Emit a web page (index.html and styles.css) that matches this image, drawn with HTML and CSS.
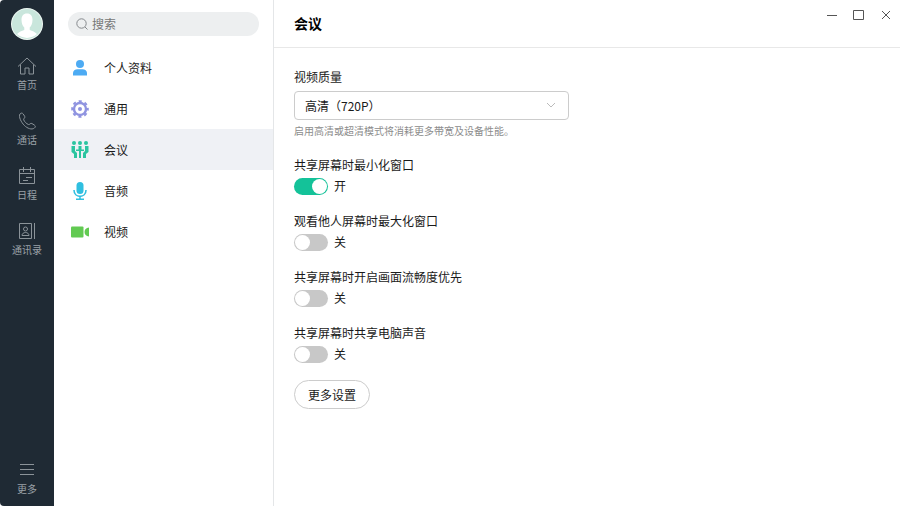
FILE: index.html
```html
<!DOCTYPE html>
<html lang="zh-CN">
<head>
    <meta charset="UTF-8">
    <meta name="viewport" content="width=device-width, initial-scale=1.0">
    <title>会议</title>
    <link rel="stylesheet" href="styles.css">
</head>
<body>

    <div class="app">
        <!-- Main navigation -->
        <nav class="rail">
            <svg class="avatar" viewBox="0 0 32 32">
                <circle cx="16" cy="16" r="16" fill="#eef7f3"/>
                <circle cx="16" cy="16" r="15" fill="#c9e6dc"/>
                <path d="M16 5.500c3.800 0 5.500 2.600 5.500 6.200 0 3.500-1.200 6.300-2.800 7.800v2.500c2.500.9 5.500 2 7.300 4.100A15 15 0 0 1 6 26.100c1.800-2.100 4.800-3.200 7.300-4.100v-2.500c-1.600-1.500-2.800-4.300-2.800-7.800 0-3.600 1.700-6.200 5.500-6.200z" fill="#fff"/>
            </svg>

            <a href="#" class="rail-link">
                <svg viewBox="0 0 20 20"><path d="M1 10.500 10 2l9 8.500M3.500 8.500v9.500H8v-6h4v6h4.500V8.500"/></svg>
                <span>首页</span>
            </a>
            <a href="#" class="rail-link">
                <svg viewBox="0 0 20 20"><path d="M3 3C4 1.800 5.300 1.800 6.200 3l1.500 2.300c.9 1.500-1.500 2.200-1 3.500.8 2 2.700 3.900 4.700 4.700 1.300.5 2-1.900 3.500-1l2.500 1.600c1.300.9 1.200 2-.1 3-2.500 2-7 .3-10-2.700S1.200 5.500 3 3z"/></svg>
                <span>通话</span>
            </a>
            <a href="#" class="rail-link">
                <svg viewBox="0 0 20 20"><path d="M2.500 3.500h15v14h-15zM2.500 7.500h15M6.500 1v5M13.500 1v5M9 11.500h6M6 14.500h5"/></svg>
                <span>日程</span>
            </a>
            <a href="#" class="rail-link">
                <svg viewBox="0 0 20 20"><path d="M2.500 2.500h12v15h-12zM17.500 2v16M5 14.500c0-4 7-4 7 0z"/><circle cx="8.500" cy="8" r="2"/></svg>
                <span>通讯录</span>
            </a>
            <a href="#" class="rail-link rail-more">
                <svg viewBox="0 0 20 20"><path d="M3 4.500h14M3 9.500h14M3 14.500h14"/></svg>
                <span>更多</span>
            </a>
        </nav>

        <!-- Settings categories -->
        <aside class="menu">
            <label class="search">
                <svg viewBox="0 0 12 12"><circle cx="5.500" cy="5.500" r="4.700"/><path d="M9 9l2.500 2.500"/></svg>
                <input type="text" placeholder="搜索" aria-label="搜索">
            </label>

            <a href="#" class="menu-item">
                <svg viewBox="0 0 18 18" fill="#4dabf3">
                    <circle cx="9" cy="5" r="4"/>
                    <path d="M2 16.500V14c0-2.500 2-3.800 4.500-3.800h5c2.500 0 4.500 1.300 4.500 3.800v2.500z"/>
                </svg>
                <span>个人资料</span>
            </a>
            <a href="#" class="menu-item">
                <svg viewBox="0 0 18 18" fill="none" stroke="#8f93e0">
                    <circle cx="9" cy="9" r="6" stroke-width="2.400"/>
                    <circle cx="9" cy="9" r="7.800" stroke-width="2" stroke-dasharray="3.126 3" stroke-dashoffset="1.563"/>
                    <circle cx="9" cy="9" r="2" fill="#8f93e0" stroke="none"/>
                </svg>
                <span>通用</span>
            </a>
            <a href="#" class="menu-item active">
                <svg viewBox="0 0 18 18" fill="#2bc5a0">
                    <circle cx="3" cy="2" r="2"/>
                    <circle cx="9" cy="2" r="2"/>
                    <circle cx="15" cy="2" r="2"/>
                    <path d="M.5 5H4v5l2 2v5H3v-4L.5 11zM17.500 5H14v5l-2 2v5h3v-4l2.500-2zM7.500 5h3v3.500H13V10h-3v7H8v-7H5V8.500h2.500z"/>
                </svg>
                <span>会议</span>
            </a>
            <a href="#" class="menu-item">
                <svg viewBox="0 0 18 18" fill="#2fbfe0">
                    <rect x="5.500" y="0" width="7" height="12" rx="3.500"/>
                    <path d="M3 8c0 8.500 12 8.500 12 0M9 14.500V17M5 17.200h8" fill="none" stroke="#2fbfe0" stroke-width="1.600"/>
                </svg>
                <span>音频</span>
            </a>
            <a href="#" class="menu-item">
                <svg viewBox="0 0 18 18" fill="#62ca52">
                    <rect x="0" y="3.500" width="12.500" height="11" rx="1"/>
                    <path d="M18 4.500v9c-3-.5-4.500-2-4.500-4.500s1.500-4 4.500-4.500z"/>
                </svg>
                <span>视频</span>
            </a>
        </aside>

        <main class="content">
            <header class="topbar">
                <h1>会议</h1>
                <div class="window-buttons">
                    <button type="button" aria-label="最小化"><svg viewBox="0 0 12 12"><path d="M1 6.500h10"/></svg></button>
                    <button type="button" aria-label="最大化"><svg viewBox="0 0 12 12"><path d="M.5 1.500h10v9H.5z"/></svg></button>
                    <button type="button" aria-label="关闭"><svg viewBox="0 0 12 12"><path d="M2 2l8 8M10 2l-8 8"/></svg></button>
                </div>
            </header>

            <form class="settings">
                <label for="quality">视频质量</label>
                <div class="select">
                    <select id="quality">
                        <option>高清（720P）</option>
                    </select>
                    <svg viewBox="0 0 10 10"><path d="M1 3l4 4 4-4"/></svg>
                </div>
                <p class="hint">启用高清或超清模式将消耗更多带宽及设备性能。</p>

                <div class="option">
                    <label for="minimize">共享屏幕时最小化窗口</label>
                    <div class="switch">
                        <input type="checkbox" id="minimize" checked>
                        <span>开</span>
                    </div>
                </div>
                <div class="option">
                    <label for="maximize">观看他人屏幕时最大化窗口</label>
                    <div class="switch">
                        <input type="checkbox" id="maximize">
                        <span>关</span>
                    </div>
                </div>
                <div class="option">
                    <label for="smooth">共享屏幕时开启画面流畅度优先</label>
                    <div class="switch">
                        <input type="checkbox" id="smooth">
                        <span>关</span>
                    </div>
                </div>
                <div class="option">
                    <label for="sound">共享屏幕时共享电脑声音</label>
                    <div class="switch">
                        <input type="checkbox" id="sound">
                        <span>关</span>
                    </div>
                </div>

                <button type="button" class="btn">更多设置</button>
            </form>
        </main>
    </div>

</body>
</html>
```
FILE: styles.css
```css
* {
    box-sizing: border-box;
}

body {
    margin: 0;
    font-family: "Noto Sans CJK SC", sans-serif;
    font-size: 12px;
    line-height: 18px;
    color: #1a1a1a;
    background: #fff;
}

input,
select,
button {
    font: inherit;
    color: inherit;
}

a {
    color: inherit;
    text-decoration: none;
}

svg {
    display: block;
    flex: none;
}

.app {
    display: flex;
    min-height: 100vh;
}

/* Rail */
.rail {
    flex: none;
    width: 54px;
    display: flex;
    flex-direction: column;
    align-items: center;
    gap: 19px;
    padding: 8px 0;
    background: #1f2a34;
    border-radius: 4px 0 0 4px;
}

.avatar {
    width: 32px;
    height: 32px;
    margin-bottom: -3px;
}

.rail-link {
    display: flex;
    flex-direction: column;
    align-items: center;
    gap: 2px;
    font-size: 10px;
    line-height: 14px;
    color: #9aa1a7;
}

.rail-link svg {
    width: 20px;
    height: 20px;
    fill: none;
    stroke: #8b9399;
}

.rail-more {
    margin-top: auto;
    padding-bottom: 2px;
}

/* Menu */
.menu {
    flex: none;
    width: 220px;
    border-right: 1px solid #e4e6e8;
}

.search {
    display: flex;
    align-items: center;
    gap: 4px;
    height: 24px;
    margin: 12px 14px 11px;
    padding: 0 8px;
    border-radius: 12px;
    background: #edeff0;
}

.search svg {
    width: 12px;
    height: 12px;
    fill: none;
    stroke: #85898c;
}

.search input {
    flex: 1;
    min-width: 0;
    padding: 0;
    border: none;
    outline: none;
    background: none;
}

.search input::placeholder {
    color: #777;
    opacity: 1;
}

.menu-item {
    display: flex;
    align-items: center;
    gap: 15px;
    height: 41px;
    padding: 0 17px;
}

.menu-item svg {
    width: 18px;
    height: 18px;
}

.menu-item.active {
    background: #eff1f5;
}

/* Content */
.content {
    flex: 1;
    min-width: 0;
}

.topbar {
    display: flex;
    justify-content: space-between;
    align-items: flex-start;
    height: 48px;
    padding: 0 8px 0 20px;
    border-bottom: 1px solid #e8e8e8;
}

h1 {
    margin: 0;
    font-size: 14px;
    font-weight: bold;
    line-height: 47px;
    color: #000;
}

.window-buttons {
    display: flex;
    gap: 15px;
    padding-top: 9px;
}

.window-buttons button {
    padding: 0;
    border: none;
    background: none;
    cursor: pointer;
}

.window-buttons svg {
    width: 12px;
    height: 12px;
    fill: none;
    stroke: #555;
}

.settings {
    padding: 20px;
}

.settings label {
    display: block;
}

.select {
    position: relative;
    width: 275px;
    max-width: 100%;
    margin-top: 5px;
}

.select select {
    display: block;
    width: 100%;
    height: 29px;
    padding: 0 10px;
    border: 1px solid #ccc;
    border-radius: 4px;
    background: #fff;
    appearance: none;
}

.select svg {
    position: absolute;
    top: 9px;
    right: 13px;
    width: 10px;
    height: 10px;
    fill: none;
    stroke: #bbb;
    pointer-events: none;
}

.hint {
    margin: 4px 0 18px;
    font-size: 10px;
    line-height: 14px;
    color: #8c8c8c;
}

.option {
    margin-bottom: 17px;
}

.switch {
    display: flex;
    align-items: center;
    gap: 6px;
    height: 18px;
    margin-top: 3px;
}

.switch input {
    width: 34px;
    height: 17px;
    margin: 0;
    padding: 1px;
    border-radius: 9px;
    background: #c8c8c8;
    appearance: none;
    cursor: pointer;
}

.switch input::before {
    content: "";
    display: block;
    width: 15px;
    height: 15px;
    border-radius: 50%;
    background: #fff;
}

.switch input:checked {
    background: #14c299;
}

.switch input:checked::before {
    margin-left: auto;
}

.btn {
    height: 29px;
    padding: 0 13px;
    border: 1px solid #ccc;
    border-radius: 15px;
    background: #fff;
    cursor: pointer;
}

.btn:hover {
    background: #f5f5f5;
}
```
